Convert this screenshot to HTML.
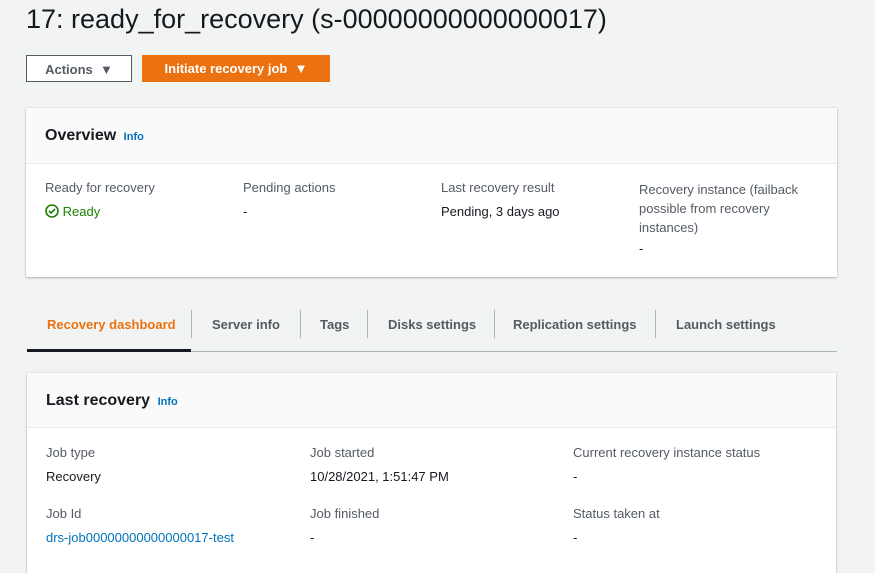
<!DOCTYPE html>
<html><head><style>
body{margin:0;width:875px;height:546px;overflow:hidden;background:#f2f3f3;font-family:"Liberation Sans",sans-serif;color:#16191f;position:relative}
.a{position:absolute;white-space:nowrap}
h1{position:absolute;left:26px;top:4px;margin:0;font-size:27px;font-weight:normal;color:#16191f}
.btn{position:absolute;top:55px;height:27px;box-sizing:border-box;font-weight:bold;font-size:13px;line-height:27px;text-align:center}
.card{position:absolute;background:#fff;box-shadow:0 1px 2px rgba(0,22,40,.25),0 0 1px rgba(0,22,40,.2)}
.hd{position:absolute;left:0;right:0;top:0;background:#fafafa;border-bottom:1px solid #eaeded}
.lbl{color:#545b64;font-size:13px}
.val{font-size:13px}
.info{color:#0073bb;font-size:11px;font-weight:bold}
.tab{position:absolute;top:317px;font-size:13px;font-weight:bold;color:#545b64}
.sep{position:absolute;top:310px;width:1px;height:28px;background:#aab7b8}
</style></head><body>
<h1>17: ready_for_recovery (s-00000000000000017)</h1>
<div class="btn" style="left:26px;width:106px;border:1px solid #545b64;background:#fff;color:#545b64">Actions &nbsp;▼</div>
<div class="btn" style="left:142px;width:188px;background:#ec7211;color:#fff">Initiate recovery job &nbsp;▼</div>

<div class="card" style="left:26px;top:108px;width:811px;height:169px">
 <div class="hd" style="height:55px"></div>
 <div class="a" style="left:19px;top:19px;font-size:16px;font-weight:bold">Overview <span class="info">&nbsp;Info</span></div>
 <div class="a lbl" style="left:19px;top:72px">Ready for recovery</div>
 <div class="a val" style="left:19px;top:96px;color:#1d8102"><svg width="14" height="14" viewBox="0 0 14 14" style="vertical-align:-2px"><circle cx="7" cy="7" r="6" fill="none" stroke="#1d8102" stroke-width="1.6"/><path d="M4 7l2 2 4-4" fill="none" stroke="#1d8102" stroke-width="1.6"/></svg> Ready</div>
 <div class="a lbl" style="left:217px;top:72px">Pending actions</div>
 <div class="a val" style="left:217px;top:96px">-</div>
 <div class="a lbl" style="left:415px;top:72px">Last recovery result</div>
 <div class="a val" style="left:415px;top:96px">Pending, 3 days ago</div>
 <div class="a lbl" style="left:613px;top:72px;line-height:19px;white-space:normal;width:180px">Recovery instance (failback possible from recovery instances)</div>
 <div class="a val" style="left:613px;top:133px">-</div>
</div>

<div class="a" style="left:27px;top:351px;width:810px;height:1px;background:#aab7b8"></div>
<div class="a" style="left:27px;top:349px;width:164px;height:3px;background:#16191f"></div>
<div class="tab" style="left:47px;color:#ec7211">Recovery dashboard</div>
<div class="sep" style="left:191px"></div>
<div class="tab" style="left:212px">Server info</div>
<div class="sep" style="left:300px"></div>
<div class="tab" style="left:320px">Tags</div>
<div class="sep" style="left:367px"></div>
<div class="tab" style="left:388px">Disks settings</div>
<div class="sep" style="left:494px"></div>
<div class="tab" style="left:513px">Replication settings</div>
<div class="sep" style="left:655px"></div>
<div class="tab" style="left:676px">Launch settings</div>

<div class="card" style="left:27px;top:373px;width:809px;height:200px">
 <div class="hd" style="height:54px"></div>
 <div class="a" style="left:19px;top:19px;font-size:16px;font-weight:bold">Last recovery <span class="info">&nbsp;Info</span></div>
 <div class="a lbl" style="left:19px;top:72px">Job type</div>
 <div class="a val" style="left:19px;top:96px">Recovery</div>
 <div class="a lbl" style="left:283px;top:72px">Job started</div>
 <div class="a val" style="left:283px;top:96px">10/28/2021, 1:51:47 PM</div>
 <div class="a lbl" style="left:546px;top:72px">Current recovery instance status</div>
 <div class="a val" style="left:546px;top:96px">-</div>
 <div class="a lbl" style="left:19px;top:133px">Job Id</div>
 <div class="a val" style="left:19px;top:157px;color:#0073bb">drs-job00000000000000017-test</div>
 <div class="a lbl" style="left:283px;top:133px">Job finished</div>
 <div class="a val" style="left:283px;top:157px">-</div>
 <div class="a lbl" style="left:546px;top:133px">Status taken at</div>
 <div class="a val" style="left:546px;top:157px">-</div>
</div>
</body></html>
